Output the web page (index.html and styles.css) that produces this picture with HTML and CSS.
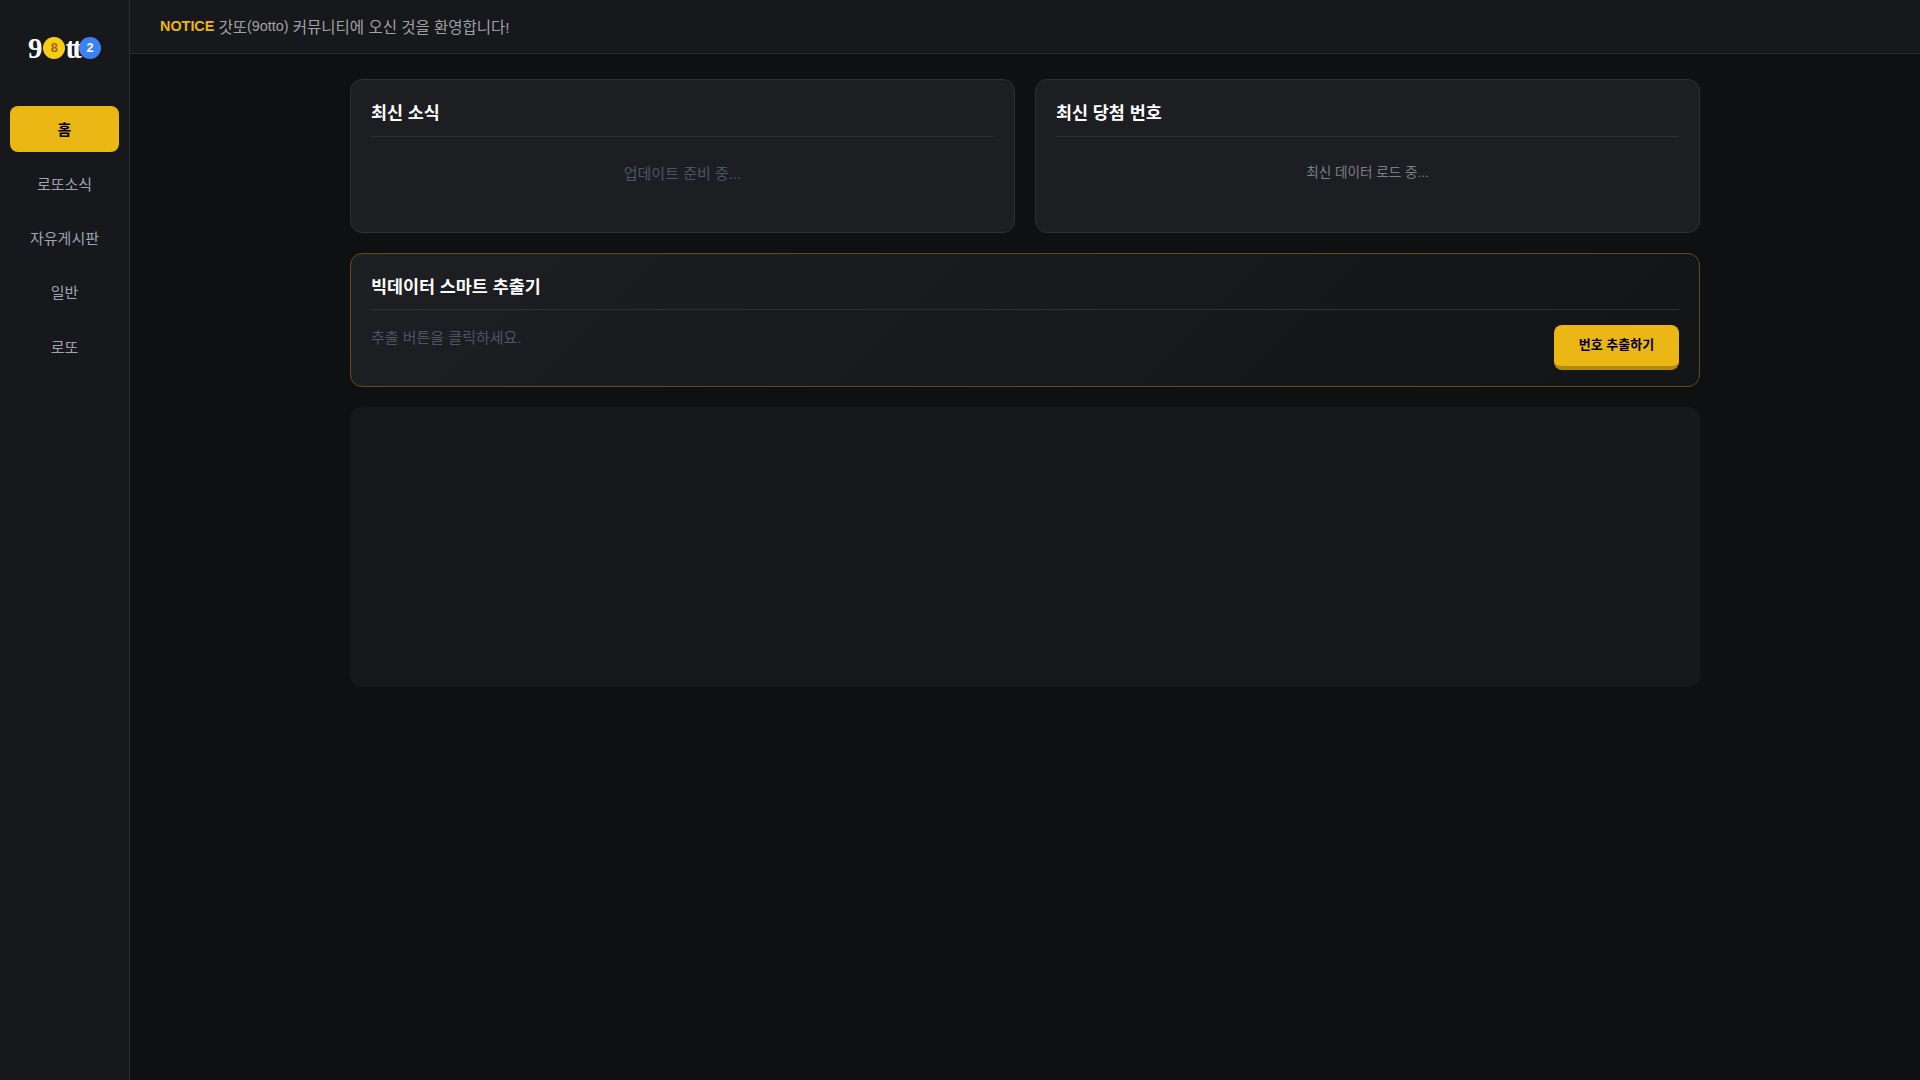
FILE: index.html
```html
<!DOCTYPE html>
<html lang="ko">
<head>
    <meta charset="UTF-8">
    <title>9otto</title>
    <link rel="stylesheet" href="styles.css">
</head>
<body>
    <aside class="sidebar">
        <div class="logo">
            <span class="logo-nine">9</span><span class="ball ball-yellow">8</span><span class="logo-tt">tt</span><span class="ball ball-blue">2</span>
        </div>
        <nav class="menu">
            <a class="menu-item active">홈</a>
            <a class="menu-item">로또소식</a>
            <a class="menu-item">자유게시판</a>
            <a class="menu-item">일반</a>
            <a class="menu-item">로또</a>
        </nav>
    </aside>

    <div class="page">
        <header class="notice">
            <strong>NOTICE</strong><span class="notice-ko">갓또</span>(9otto)<span class="notice-ko">&nbsp;커뮤니티에 오신 것을 환영합니다!</span>
        </header>

        <main class="content">
            <div class="row-two">
                <section class="card">
                    <h2>최신 소식</h2>
                    <p class="empty">업데이트 준비 중...</p>
                </section>
                <section class="card">
                    <h2>최신 당첨 번호</h2>
                    <p class="loading">최신 데이터 로드 중...</p>
                </section>
            </div>

            <section class="card card-gold">
                <h2>빅데이터 스마트 추출기</h2>
                <div class="extract">
                    <p class="hint">추출 버튼을 클릭하세요.</p>
                    <button class="btn-extract">번호 추출하기</button>
                </div>
            </section>

            <section class="ad-box"></section>
        </main>
    </div>
</body>
</html>
```

FILE: styles.css
```css
* {
    box-sizing: border-box;
}

body {
    margin: 0;
    height: 100vh;
    display: flex;
    overflow: hidden;
    background-color: #0f1012;
    color: #fff;
    font-family: "Liberation Sans", "Noto Sans CJK KR", sans-serif;
}

.sidebar {
    width: 130px;
    flex-shrink: 0;
    background-color: #16181c;
    border-right: 1px solid #2a2c30;
    padding: 32px 10px 0;
}

.logo {
    display: flex;
    justify-content: center;
    align-items: center;
    height: 32px;
}

.logo-nine,
.logo-tt {
    font-family: "Liberation Serif", serif;
    font-size: 28.8px;
    font-weight: 700;
    line-height: 32px;
}

.logo-nine {
    margin-right: 1px;
}

.logo-tt {
    letter-spacing: -2.8px;
}

.ball {
    width: 22px;
    height: 22px;
    border-radius: 50%;
    display: flex;
    justify-content: center;
    align-items: center;
    font-size: 12.8px;
    font-weight: 700;
    padding-bottom: 2px;
}

.ball-yellow {
    background-color: #facc15;
    color: #a16207;
}

.ball-blue {
    background-color: #3b82f6;
    color: #fff;
}

.menu {
    margin-top: 42px;
    display: flex;
    flex-direction: column;
    gap: 8px;
}

.menu-item {
    height: 46.4px;
    padding-bottom: 1px;
    border-radius: 8px;
    display: flex;
    justify-content: center;
    align-items: center;
    font-size: 15px;
    color: #a0a4ac;
}

.menu-item.active {
    background-color: #eab714;
    color: #000;
    font-weight: 700;
}

.page {
    flex: 1;
    min-width: 0;
}

.notice {
    height: 54px;
    padding: 0 30px 2px;
    display: flex;
    align-items: center;
    white-space: pre;
    background-color: #16181c;
    border-bottom: 1px solid #2a2c30;
    font-size: 14.4px;
    color: #a0a2a6;
}

.notice strong {
    color: #eab714;
    margin-right: 4px;
}

.notice-ko {
    font-size: 15.5px;
}

.content {
    width: 1350px;
    margin: 25px auto 0;
    display: flex;
    flex-direction: column;
    gap: 20px;
}

.row-two {
    display: grid;
    grid-template-columns: 1fr 1fr;
    gap: 20px;
}

.card {
    background-color: #1c1e22;
    border: 1px solid #2e3035;
    border-radius: 12px;
    padding: 20px;
    height: 154px;
}

.card h2 {
    margin: 0 0 10px;
    padding-bottom: 10px;
    font-size: 17.4px;
    line-height: 26px;
    font-weight: 700;
    border-bottom: 1px solid #2e3035;
}

.empty {
    margin: 25px 0 0;
    text-align: center;
    font-size: 15px;
    color: #4b5563;
}

.loading {
    margin: 24px 0 0;
    text-align: center;
    font-size: 13.6px;
    color: #7c7f85;
}

.card-gold {
    height: 134px;
    border-color: #5c4d1c;
    background-image: linear-gradient(135deg, #1d1f23, #121416);
}

.card-gold h2 {
    padding-bottom: 9px;
}

.extract {
    display: flex;
    justify-content: space-between;
    align-items: flex-start;
    margin-top: 15px;
}

.hint {
    margin: 0;
    padding-top: 1px;
    font-size: 15px;
    color: #4b5563;
}

.btn-extract {
    width: 125px;
    height: 45px;
    padding: 0 0 4px;
    border: none;
    border-radius: 8px;
    border-bottom: 4px solid #b38a0b;
    background-color: #eab714;
    color: #000;
    font-family: inherit;
    font-size: 13px;
    font-weight: 700;
}

.ad-box {
    height: 280px;
    border-radius: 12px;
    background-color: #16181b;
}
```
